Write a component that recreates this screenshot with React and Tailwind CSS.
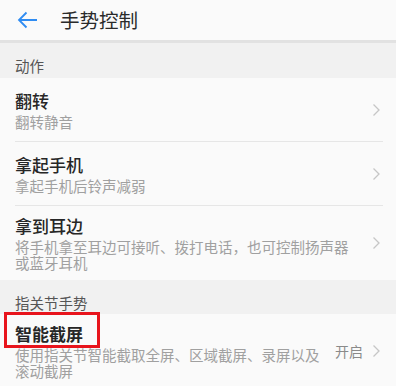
import React from "react";

const Chevron = () => (
  <svg width="10" height="16" viewBox="0 0 10 16" className="shrink-0">
    <path d="M2.5 2.5 L8 8 L2.5 13.5" fill="none" stroke="#c6c6c6" strokeWidth="1.3" />
  </svg>
);

const SectionHeader = ({ children, h = "h-[35px]" }) => (
  <div className={`${h} bg-[#f1f1f1] px-[15px] pt-[15px] text-[14.5px] leading-[16px] text-[#555]`}>
    {children}
  </div>
);

const Row = ({ title, sub, value, divider = true, bold = false }) => (
  <div className="relative">
    <div className="flex min-h-[63px] items-center pl-[15px] pr-[15px] py-[9px]">
      <div className="flex flex-1 flex-col justify-center pr-[14px]">
        <div className={`text-[17px] leading-[22px] text-[#262626] ${bold ? "font-semibold" : "font-medium"}`}>
          {title}
        </div>
        <div className="mt-[2px] text-[14.5px] leading-[16px] text-[#a0a0a0]">{sub}</div>
      </div>
      {value && <span className="mr-[8px] text-[14px] text-[#8a8a8a]">{value}</span>}
      <Chevron />
    </div>
    {divider && <div className="ml-[15px] mr-[13px] h-px bg-[#e6e6e6]" />}
  </div>
);

export default function App() {
  return (
    <div
      className="h-[386px] w-[400px] overflow-hidden bg-white"
      style={{ fontFamily: '"Noto Sans CJK SC", "Noto Sans", sans-serif' }}
    >
      <div className="w-[396px] bg-[#fafafa]">
        <div className="flex h-[43px] items-center border-b-[3px] border-[#e2e2e2] bg-[#fafafa]">
          <svg width="22" height="18" viewBox="0 0 22 18" className="ml-[17px]">
            <path d="M2 9 H20 M9.5 1.5 L2 9 L9.5 16.5" fill="none" stroke="#2f8cf2" strokeWidth="1.8" />
          </svg>
          <span className="ml-[21px] text-[19.5px] text-[#2a2a2a]">手势控制</span>
        </div>
        <SectionHeader>动作</SectionHeader>
        <Row title="翻转" sub="翻转静音" />
        <Row title="拿起手机" sub="拿起手机后铃声减弱" />
        <Row
          title="拿到耳边"
          sub="将手机拿至耳边可接听、拨打电话，也可控制扬声器或蓝牙耳机"
          divider={false}
        />
        <SectionHeader h="h-[34px]">指关节手势</SectionHeader>
        <div className="relative">
          <Row
            title="智能截屏"
            sub="使用指关节智能截取全屏、区域截屏、录屏以及滚动截屏"
            value="开启"
            divider={false}
            bold
          />
          <div className="absolute left-[4px] top-[-2px] h-[36px] w-[96px] border-[3px] border-[#e8141c]" />
        </div>
      </div>
    </div>
  );
}
